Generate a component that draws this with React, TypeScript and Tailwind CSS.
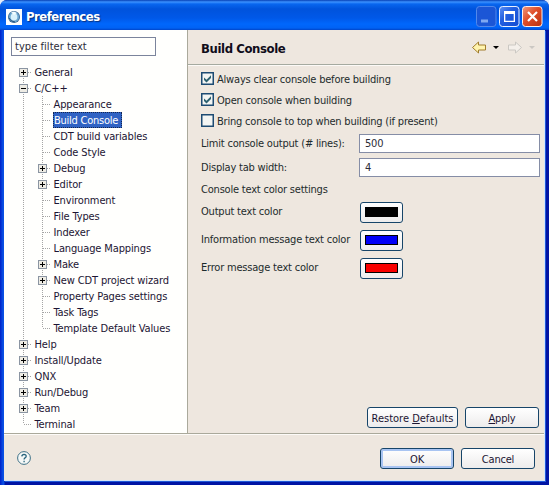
import React from 'react';

type Node = { label: string; level: 0 | 1; box?: '+' | '-'; selected?: boolean };

const nodes: Node[] = [
  { label: 'General', level: 0, box: '+' },
  { label: 'C/C++', level: 0, box: '-' },
  { label: 'Appearance', level: 1 },
  { label: 'Build Console', level: 1, selected: true },
  { label: 'CDT build variables', level: 1 },
  { label: 'Code Style', level: 1 },
  { label: 'Debug', level: 1, box: '+' },
  { label: 'Editor', level: 1, box: '+' },
  { label: 'Environment', level: 1 },
  { label: 'File Types', level: 1 },
  { label: 'Indexer', level: 1 },
  { label: 'Language Mappings', level: 1 },
  { label: 'Make', level: 1, box: '+' },
  { label: 'New CDT project wizard', level: 1, box: '+' },
  { label: 'Property Pages settings', level: 1 },
  { label: 'Task Tags', level: 1 },
  { label: 'Template Default Values', level: 1 },
  { label: 'Help', level: 0, box: '+' },
  { label: 'Install/Update', level: 0, box: '+' },
  { label: 'QNX', level: 0, box: '+' },
  { label: 'Run/Debug', level: 0, box: '+' },
  { label: 'Team', level: 0, box: '+' },
  { label: 'Terminal', level: 0 },
];

function Branch({ box, up, down }: { box?: '+' | '-'; up: boolean; down: boolean }) {
  return (
    <svg width="19" height="16" className="shrink-0" shapeRendering="crispEdges">
      <g stroke="#a5a5a5" strokeDasharray="1 1" fill="none">
        {up && <path d="M8.5 0V8" />}
        {down && <path d="M8.5 8V16" />}
        <path d="M9 8.5H17" />
      </g>
      {box && (
        <>
          <rect x="4.5" y="4.5" width="8" height="8" fill="#eeece4" stroke="#8b95a2" />
          <path d={box === '+' ? 'M6 8.5H11M8.5 6V11' : 'M6 8.5H11'} stroke="#000" />
        </>
      )}
    </svg>
  );
}

function Guide() {
  return (
    <svg width="19" height="16" className="shrink-0" shapeRendering="crispEdges">
      <path d="M8.5 0V16" stroke="#a5a5a5" strokeDasharray="1 1" />
    </svg>
  );
}

function TreeRow({ node, index }: { node: Node; index: number }) {
  const nextLevel = nodes[index + 1]?.level;
  return (
    <div className="flex h-4 items-center tracking-[-0.13px]">
      {node.level === 1 && <Guide />}
      <Branch
        box={node.box}
        up={index > 0}
        down={node.level === 0 ? index < nodes.length - 1 : nextLevel === 1}
      />
      <span
        className={
          node.selected
            ? 'flex h-4 w-[69px] items-center border border-dotted border-[#14264f] bg-[#2f62c4] pt-px leading-[14px] tracking-[-0.25px] text-white'
            : 'pt-px pl-[0.5px] leading-[17px] text-[#1c1533]'
        }
      >
        {node.label}
      </span>
    </div>
  );
}

function Check({ label, checked }: { label: string; checked?: boolean }) {
  return (
    <label className="flex h-[21px] items-center">
      <svg width="13" height="13" className="mr-[3px] shrink-0">
        <rect x=".75" y=".75" width="11.5" height="11.5" fill="#f3f5f3" stroke="#1d4b73" strokeWidth="1.5" />
        {checked && <path d="M3 5.5V8L5.5 10.5L10 6V3.2L5.5 7.8Z" fill="#2c6170" />}
      </svg>
      <span className="pt-[3px]">{label}</span>
    </label>
  );
}

function Button({ children, className = '' }: { children: React.ReactNode; className?: string }) {
  return (
    <button
      className={
        'flex h-[21px] items-center justify-center rounded-[3px] border border-[#174569] bg-linear-to-b from-white to-[#edecec] leading-none text-[#1c1533] ' +
        className
      }
    >
      {children}
    </button>
  );
}

function ColorRow({ label, swatch }: { label: string; swatch: string }) {
  return (
    <div className="flex h-7 items-center">
      <span className="w-[159px] whitespace-nowrap pt-px">{label}</span>
      <Button className="w-[43px]">
        <span className={'h-[10px] w-[33px] border border-black ' + swatch} />
      </Button>
    </div>
  );
}

function Field({ label, value }: { label: string; value: string }) {
  return (
    <div className="flex h-[19px] items-center">
      <span className="w-[158px] whitespace-nowrap pt-[2px]">{label}</span>
      <div className="flex h-[19px] w-[181px] items-center border border-[#858da6] bg-white pt-[2px] pl-[5px] text-[#2c2c38]">{value}</div>
    </div>
  );
}

export default function App() {
  return (
    <div className="h-[485px] w-[549px] overflow-hidden bg-[#e3edfa] font-['DejaVu_Sans_Condensed','DejaVu_Sans',sans-serif] text-[11px] tracking-[-0.2px] text-[#1d2b2c] [font-stretch:condensed]">
      <div className="flex h-full flex-col rounded-t-[7px] bg-[linear-gradient(to_right,#0020c8_0px,#0a50e4_3px,#0a50e4_4px,#0014a4_5px,#0014a4_100%)]">
        <header className="flex h-[30px] shrink-0 items-center rounded-t-[7px] bg-[linear-gradient(to_bottom,#0640b5_0px,#3b91ff_2px,#0866ef_4px,#0053dc_9px,#0058e8_18px,#0067fc_24px,#0062f4_28px,#0045c8_30px)] pt-[3px] pr-[6px] pl-[6px]">
          <svg width="16" height="16" className="mr-1 shrink-0">
            <rect width="16" height="16" fill="#fcfeff" />
            <circle cx="8" cy="8" r="6" fill="#356797" />
            <circle cx="8" cy="8" r="5.2" fill="#6ca7d0" />
            <circle cx="8" cy="8" r="3.4" fill="#d8f1fb" />
            <path d="M5 3.5L8 2.5L11 4L8 6Z" fill="#f3fdff" />
            <path d="M3 9Q5 13 9 13" stroke="#24517f" fill="none" />
          </svg>
          <h1 className="text-[13px] font-bold tracking-[-0.5px] text-white [text-shadow:1px_1px_1px_#07327f]">Preferences</h1>
          <svg width="67" height="21" className="ml-auto">
            <defs>
              <linearGradient id="blue" x2="1" y2="1">
                <stop stopColor="#5e91f5" />
                <stop offset=".4" stopColor="#225fe0" />
                <stop offset="1" stopColor="#124bd2" />
              </linearGradient>
              <linearGradient id="red" x2="1" y2="1">
                <stop stopColor="#ef9a7e" />
                <stop offset=".45" stopColor="#df4d29" />
                <stop offset="1" stopColor="#b93110" />
              </linearGradient>
            </defs>
            <rect x=".5" y=".5" width="19.5" height="20" rx="3" fill="#1b56d6" stroke="#5288eb" />
            <path d="M5 13.5h7v3H5z" fill="#7fa8f1" />
            <rect x="23.5" y=".5" width="19.5" height="20" rx="3" fill="url(#blue)" stroke="#e8f0ff" />
            <path fillRule="evenodd" d="M28 5h11v11H28zM29.3 8v6.7h8.4V8z" fill="#fff" />
            <rect x="46.5" y=".5" width="19.5" height="20" rx="3" fill="url(#red)" stroke="#fff0ec" />
            <path d="M52 6L61 15M61 6L52 15" stroke="#fff" strokeWidth="2.2" />
          </svg>
        </header>

        <div className="mr-1 mb-1 ml-1 flex min-h-0 flex-1 flex-col border-r border-b border-[#d5e4f7] bg-[#eee7df] shadow-[1px_1px_0_#1f58d8]">
          <div className="flex h-[404px] shrink-0 border-b border-[#aaa99b]">
            <aside className="w-[183px] shrink-0 bg-[#fffffd] pt-[7px]">
              <div className="ml-[7px] flex h-[19px] w-[145px] items-center border border-[#7b849c] pt-px pl-[3px] tracking-[0.05px] text-[#2c2c38]">type filter text</div>
              <div className="mt-2 ml-[11px]">
                {nodes.map((n, i) => (
                  <TreeRow key={n.label} node={n} index={i} />
                ))}
              </div>
            </aside>

            <main className="flex min-w-0 flex-1 flex-col border-l border-[#aaa99b]">
              <div className="flex h-[35px] shrink-0 items-center border-b border-[#a5aaa0] pl-[13px] shadow-[0_1px_0_#fcfaf7]">
                <h2 className="pt-[3px] text-[13px] font-bold tracking-[-0.4px] text-[#100d1a]">Build Console</h2>
                <svg width="72" height="20" className="mr-[3px] ml-auto">
                  <path d="M3.5 10.5L9.5 5V8H16.5V13H9.5V16Z" fill="#fff4ae" stroke="#a17d2c" />
                  <path d="M24 9H30L27 12Z" fill="#000" />
                  <path d="M52.5 10.5L46.5 5V8H39.5V13H46.5V16Z" fill="#f4f0eb" stroke="#cbc8c3" />
                  <path d="M60 9H66L63 12Z" fill="#cbc8c3" />
                </svg>
              </div>
              <div className="flex flex-1 flex-col pt-[3px] pl-[13px]">
                <Check label="Always clear console before building" checked />
                <Check label="Open console when building" checked />
                <Check label="Bring console to top when building (if present)" />
                <div className="mt-[3px] flex flex-col gap-[5px]">
                  <Field label="Limit console output (# lines):" value="500" />
                  <Field label="Display tab width:" value="4" />
                </div>
                <div className="flex h-[21px] items-center pt-[5px]">Console text color settings</div>
                <ColorRow label="Output text color" swatch="bg-black" />
                <ColorRow label="Information message text color" swatch="bg-[#0000f8]" />
                <ColorRow label="Error message text color" swatch="bg-[#f80000]" />
                <div className="mt-auto mr-[5px] mb-[5px] flex justify-end gap-[7px]">
                  <Button className="w-[91px] pt-[2px]">
                    <span className="tracking-[0px]">Restore <u>D</u>efaults</span>
                  </Button>
                  <Button className="w-[74px] pt-[2px]">
                    <span><u>A</u>pply</span>
                  </Button>
                </div>
              </div>
            </main>
          </div>

          <footer className="flex flex-1 items-center border-t border-[#fdfbf8] pt-px pr-[9px] pl-[13px]">
            <svg width="14" height="14">
              <circle cx="7" cy="7" r="6.4" fill="#f5f8f7" stroke="#3f7187" />
              <path d="M4.8 5.4Q5 3.3 7 3.3Q9.2 3.4 9.2 5.2Q9.2 6.2 8 6.9Q7.1 7.4 7.1 8.5M7.1 9.7V11.2" fill="none" stroke="#28657e" strokeWidth="1.3" />
            </svg>
            <div className="ml-auto flex gap-[7px]">
              <Button className="w-[74px] pt-[2px] shadow-[inset_0_0_0_2px_#a8c4f2]">OK</Button>
              <Button className="w-[74px] pt-[2px]">Cancel</Button>
            </div>
          </footer>
        </div>
      </div>
    </div>
  );
}
